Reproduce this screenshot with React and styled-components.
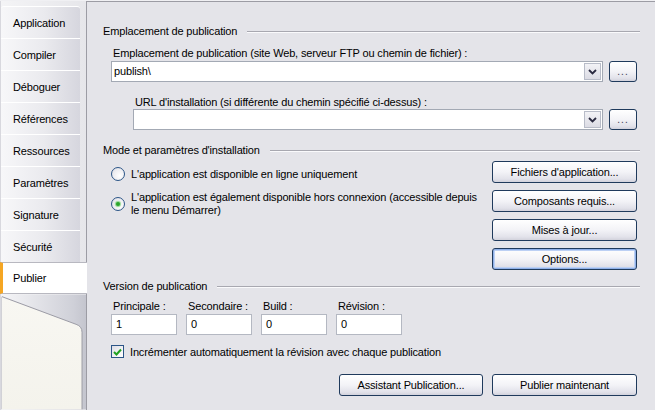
import React from 'react';
import styled, { createGlobalStyle } from 'styled-components';

const GlobalStyle = createGlobalStyle`
  html, body {
    margin: 0;
    padding: 0;
    background: #e4e4e9;
  }
  body {
    font-family: "Liberation Sans", Arial, sans-serif;
    font-size: 11px;
    letter-spacing: -0.15px;
    color: #000;
  }
`;

const Window = styled.div`
  display: flex;
  width: 655px;
  height: 410px;
  padding-top: 1px;
  box-sizing: border-box;
  overflow: hidden;
  background: #f0f0f3;
`;

const Sidebar = styled.div`
  display: flex;
  flex-direction: column;
  width: 86px;
  flex-shrink: 0;
  padding-top: 5px;
  box-sizing: border-box;
  background: linear-gradient(to right, #f4f4f6 0%, #e6e6ea 100%);
  border-left: 1px solid #d8d8de;
`;

const Tab = styled.div`
  position: relative;
  z-index: 1;
  height: 32px;
  box-sizing: border-box;
  display: flex;
  align-items: center;
  padding-left: ${({ $active }) => ($active ? '10px' : '12px')};
  width: ${({ $active }) => ($active ? '87px' : '79px')};
  margin-left: ${({ $active }) => ($active ? '-1px' : '0')};
  border-top: 1px solid ${({ $active }) => ($active ? '#b8b8c0' : '#ffffff')};
  border-bottom: ${({ $active }) => ($active ? '1px solid #b8b8c0' : '0')};
  border-left: ${({ $active }) => ($active ? '3px solid #f5a623' : '0')};
  border-radius: ${({ $first }) => ($first ? '3px 3px 0 0' : '0')};
  background: ${({ $active }) =>
    $active ? '#ffffff' : 'linear-gradient(to right, #f7f7f9 0%, #eaeaee 55%, #d6d6de 100%)'};
  font-size: 11px;
  white-space: nowrap;
`;

const Tail = styled.div`
  flex: 1;
  display: flex;
`;

const Panel = styled.div`
  flex: 1;
  display: flex;
  flex-direction: column;
  background: #e4e4e9;
  border-top: 1px solid #9c9ca4;
  border-left: 1px solid #9c9ca4;
  padding: 23px 18px 0 16px;
  box-sizing: border-box;
`;

const GroupHeader = styled.div`
  display: flex;
  align-items: center;
  gap: 10px;
  height: 13px;
  line-height: 13px;
  margin-top: ${({ $top }) => $top || 0}px;
  margin-right: -3px;
  white-space: nowrap;

  &::after {
    content: '';
    flex: 1;
    height: 0;
    border-top: 1px solid #a8a8b0;
    border-bottom: 1px solid #fafafc;
  }
`;

const FieldLabel = styled.div`
  height: 13px;
  line-height: 13px;
  margin-top: ${({ $top }) => $top || 0}px;
  padding-left: ${({ $indent }) => $indent || 0}px;
  white-space: nowrap;
`;

const ComboRow = styled.div`
  display: flex;
  gap: 6px;
  margin-top: ${({ $top }) => $top || 0}px;
  padding-left: ${({ $indent }) => $indent || 0}px;
`;

const Combo = styled.div`
  flex: 1;
  display: flex;
  height: 21px;
  box-sizing: border-box;
  border: 1px solid #a3a9b4;
  background: #fff;
  padding: 1px;
`;

const ComboText = styled.div`
  flex: 1;
  line-height: 17px;
  padding-left: 1px;
`;

const DropButton = styled.div`
  width: 17px;
  display: flex;
  align-items: center;
  justify-content: center;
  box-sizing: border-box;
  border: 1px solid #b8bcc8;
  background: linear-gradient(to bottom, #f2f2f6 0%, #dcdce4 100%);
`;

const Button = styled.div`
  height: 22px;
  width: ${({ $w }) => ($w ? `${$w}px` : 'auto')};
  box-sizing: border-box;
  display: flex;
  align-items: center;
  justify-content: center;
  border: 1px solid #1f3a5c;
  border-radius: 3px;
  background: linear-gradient(to bottom, #ffffff 0%, #f3f3f7 50%, #e2e2ea 85%, #d2d2dc 100%);
  box-shadow: ${({ $default }) =>
    $default ? 'inset 0 0 0 1px #8fb0e8, inset 0 0 0 2px #bcd0f4' : 'none'};
  white-space: nowrap;
`;

const BrowseButton = styled(Button)`
  width: 28px;
  height: 21px;
  color: #3a3a50;
  font-size: 10px;
  letter-spacing: 1px;
`;

const ModeRow = styled.div`
  display: flex;
  margin-top: 4px;
`;

const RadioColumn = styled.div`
  flex: 1;
  display: flex;
  flex-direction: column;
  padding-left: 8px;
  padding-top: 6px;
`;

const RadioRow = styled.div`
  display: flex;
  align-items: center;
  gap: 6px;
  margin-top: ${({ $top }) => $top || 0}px;
`;

const RadioCircle = styled.div`
  width: 12px;
  height: 12px;
  flex-shrink: 0;
  border-radius: 50%;
  border: 1px solid #2b5587;
  background: radial-gradient(circle at 65% 65%, #ffffff 0%, #ececf0 60%, #d6d6de 100%);
  display: flex;
  align-items: center;
  justify-content: center;

  &::after {
    content: '';
    width: 4px;
    height: 4px;
    border-radius: 50%;
    background: ${({ $checked }) => ($checked ? '#2ca42c' : 'transparent')};
    box-shadow: ${({ $checked }) => ($checked ? '0 0 1px 1px #8fd88f' : 'none')};
  }
`;

const RadioText = styled.div`
  line-height: 13px;
`;

const ButtonColumn = styled.div`
  width: 145px;
  display: flex;
  flex-direction: column;
  gap: 7px;
`;

const VersionGrid = styled.div`
  display: grid;
  grid-template-columns: repeat(4, 66px);
  column-gap: 9px;
  margin-top: 7px;
  padding-left: 8px;
`;

const VersionField = styled.div`
  display: flex;
  flex-direction: column;
  gap: 1px;
`;

const VersionLabel = styled.div`
  height: 13px;
  line-height: 13px;
  padding-left: 2px;
  white-space: nowrap;
`;

const TextBox = styled.div`
  height: 21px;
  box-sizing: border-box;
  border: 1px solid #b4b8c2;
  background: #fff;
  line-height: 19px;
  padding-left: 4px;
`;

const CheckRow = styled.div`
  display: flex;
  align-items: center;
  gap: 6px;
  margin-top: 10px;
  padding-left: 8px;
`;

const CheckBox = styled.div`
  width: 13px;
  height: 13px;
  box-sizing: border-box;
  border: 1px solid #2b5587;
  background: linear-gradient(135deg, #dcdce4 0%, #f4f4f6 60%, #ffffff 100%);
  display: flex;
  align-items: center;
  justify-content: center;
`;

const Footer = styled.div`
  display: flex;
  justify-content: flex-end;
  gap: 9px;
  margin-top: 16px;
`;

const tabs = [
  'Application',
  'Compiler',
  'Déboguer',
  'Références',
  'Ressources',
  'Paramètres',
  'Signature',
  'Sécurité',
  'Publier',
];

const Chevron = () => (
  <svg width="9" height="6" viewBox="0 0 9 6">
    <polyline points="1,1 4.5,4.5 8,1" fill="none" stroke="#2a2a40" strokeWidth="1.8" />
  </svg>
);

const TabFold = () => (
  <svg width="86" height="116" viewBox="0 0 86 116" style={{ display: 'block' }}>
    <defs>
      <linearGradient id="foldBg" x1="0" y1="0" x2="1" y2="0">
        <stop offset="0" stopColor="#f6f6f8" />
        <stop offset="0.85" stopColor="#cfd0d8" />
        <stop offset="1" stopColor="#c4c5ce" />
      </linearGradient>
      <linearGradient id="cream" x1="0" y1="0" x2="0" y2="1">
        <stop offset="0" stopColor="#f8f7f2" />
        <stop offset="1" stopColor="#f4f3ec" />
      </linearGradient>
    </defs>
    <rect x="0" y="0" width="86" height="116" fill="url(#foldBg)" />
    <path d="M1,2 L76,30 Q82,32 82,38 L82,116 L1,116 Z" fill="url(#cream)" />
    <path d="M1,2 L76,30 Q82,32 82,38 L82,116" fill="none" stroke="#9a9aa4" strokeWidth="1" />
    <line x1="0.5" y1="2" x2="0.5" y2="116" stroke="#d0d0d6" strokeWidth="1" />
  </svg>
);

export default function App() {
  return (
    <>
      <GlobalStyle />
      <Window>
        <Sidebar>
          {tabs.map((t, i) => (
            <Tab key={t} $first={i === 0} $active={t === 'Publier'}>
              {t}
            </Tab>
          ))}
          <Tail>
            <TabFold />
          </Tail>
        </Sidebar>

        <Panel>
          <GroupHeader>Emplacement de publication</GroupHeader>
          <FieldLabel $top={9} $indent={10}>
            Emplacement de publication (site Web, serveur FTP ou chemin de fichier) :
          </FieldLabel>
          <ComboRow $top={1} $indent={8}>
            <Combo>
              <ComboText>publish\</ComboText>
              <DropButton>
                <Chevron />
              </DropButton>
            </Combo>
            <BrowseButton>...</BrowseButton>
          </ComboRow>

          <FieldLabel $top={14} $indent={32}>
            URL d'installation (si différente du chemin spécifié ci-dessus) :
          </FieldLabel>
          <ComboRow $top={0} $indent={30}>
            <Combo>
              <ComboText />
              <DropButton>
                <Chevron />
              </DropButton>
            </Combo>
            <BrowseButton>...</BrowseButton>
          </ComboRow>

          <GroupHeader $top={14}>Mode et paramètres d'installation</GroupHeader>
          <ModeRow>
            <RadioColumn>
              <RadioRow>
                <RadioCircle />
                <RadioText>L'application est disponible en ligne uniquement</RadioText>
              </RadioRow>
              <RadioRow $top={10}>
                <RadioCircle $checked />
                <RadioText>
                  L'application est également disponible hors connexion (accessible depuis
                  <br />
                  le menu Démarrer)
                </RadioText>
              </RadioRow>
            </RadioColumn>
            <ButtonColumn>
              <Button>Fichiers d'application...</Button>
              <Button>Composants requis...</Button>
              <Button>Mises à jour...</Button>
              <Button $default>Options...</Button>
            </ButtonColumn>
          </ModeRow>

          <GroupHeader $top={10}>Version de publication</GroupHeader>
          <VersionGrid>
            {[
              ['Principale :', '1'],
              ['Secondaire :', '0'],
              ['Build :', '0'],
              ['Révision :', '0'],
            ].map(([label, value]) => (
              <VersionField key={label}>
                <VersionLabel>{label}</VersionLabel>
                <TextBox>{value}</TextBox>
              </VersionField>
            ))}
          </VersionGrid>

          <CheckRow>
            <CheckBox>
              <svg width="9" height="8" viewBox="0 0 9 8">
                <polyline points="1,4 3.5,6.5 8,1.5" fill="none" stroke="#21a121" strokeWidth="2" />
              </svg>
            </CheckBox>
            <span>Incrémenter automatiquement la révision avec chaque publication</span>
          </CheckRow>

          <Footer>
            <Button $w={144}>Assistant Publication...</Button>
            <Button $w={145}>Publier maintenant</Button>
          </Footer>
        </Panel>
      </Window>
    </>
  );
}
